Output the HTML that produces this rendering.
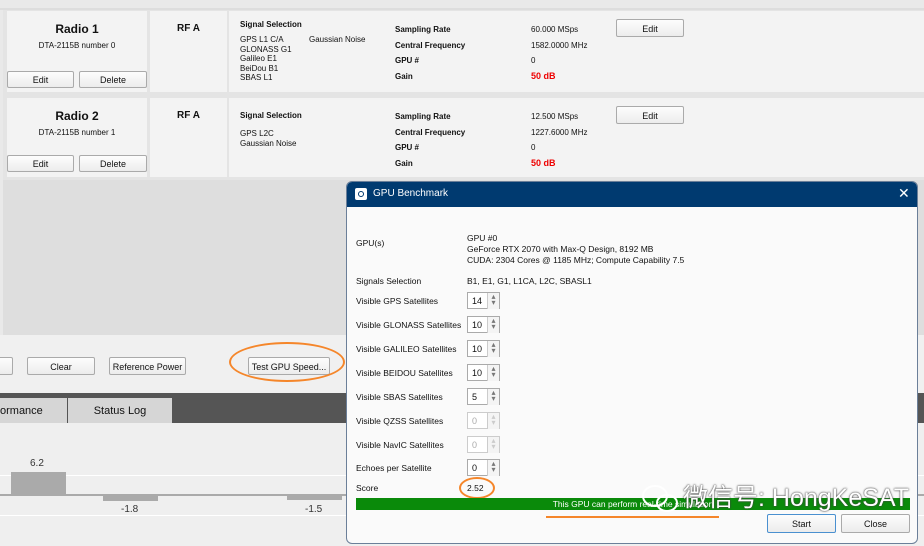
<!DOCTYPE html>
<html><head><meta charset="utf-8"><style>
*{box-sizing:border-box;margin:0;padding:0}
body{width:924px;height:546px;overflow:hidden;background:#e9e9e9;font-family:"Liberation Sans",sans-serif;position:relative;font-size:9px;color:#111}
.a{position:absolute}
.cell{position:absolute;background:#f3f3f3}
.btn{position:absolute;background:linear-gradient(#fdfdfd,#ececec);border:1px solid #aaa;border-radius:2px;text-align:center;font-size:9px;color:#111}
b{font-weight:bold}
.lbl{position:absolute;font-size:8.5px}
.spin{position:absolute;width:33px;height:17px;border:1px solid #aaa;background:#fff;font-size:9px;padding:3px 0 0 4px}
.spin:after{content:"▴\A▾";white-space:pre;line-height:6px;font-size:8px;color:#777;text-align:center;padding-top:1px;position:absolute;right:0;top:0;width:11px;height:15px;border-left:1px solid #ccc;background:#f4f4f4}
.dis{color:#aaa;border-color:#ccc}
.dis:after{color:#ccc}
</style></head><body>
<div class="a" style="left:0;top:8px;width:924px;height:2px;background:#ddd"></div>
<div class="a" style="left:3px;top:10px;width:921px;height:170px;background:#e4e4e4"></div>
<!-- row1 -->
<div class="cell" style="left:7px;top:11px;width:140px;height:81px"></div>
<div class="cell" style="left:150px;top:11px;width:77px;height:81px"></div>
<div class="cell" style="left:229px;top:11px;width:695px;height:81px"></div>
<div class="a" style="left:7px;top:22px;width:140px;text-align:center;font-size:12px;font-weight:bold">Radio 1</div>
<div class="a" style="left:7px;top:41px;width:140px;text-align:center;font-size:8px">DTA-2115B number 0</div>
<div class="btn" style="left:7px;top:71px;width:67px;height:17px;padding-top:3px">Edit</div>
<div class="btn" style="left:79px;top:71px;width:68px;height:17px;padding-top:3px">Delete</div>
<div class="a" style="left:150px;top:23px;width:77px;text-align:center;font-size:10px;font-weight:bold">RF A</div>
<div class="a" style="left:240px;top:20px;font-size:8px;font-weight:bold">Signal Selection</div>
<div class="a" style="left:240px;top:35px;font-size:8px;line-height:9.5px">GPS L1 C/A<br>GLONASS G1<br>Galileo E1<br>BeiDou B1<br>SBAS L1</div>
<div class="a" style="left:309px;top:35px;font-size:8px">Gaussian Noise</div>
<div class="a" style="left:395px;top:22px;font-size:8px;font-weight:bold;line-height:15.5px">Sampling Rate<br>Central Frequency<br>GPU #<br>Gain</div>
<div class="a" style="left:531px;top:22px;font-size:8px;line-height:15.5px">60.000 MSps<br>1582.0000 MHz<br>0<br><b style="color:#e00;font-size:9px">50 dB</b></div>
<div class="btn" style="left:616px;top:19px;width:68px;height:18px;padding-top:4px">Edit</div>
<!-- row2 -->
<div class="cell" style="left:7px;top:98px;width:140px;height:79px"></div>
<div class="cell" style="left:150px;top:98px;width:77px;height:79px"></div>
<div class="cell" style="left:229px;top:98px;width:695px;height:79px"></div>
<div class="a" style="left:7px;top:109px;width:140px;text-align:center;font-size:12px;font-weight:bold">Radio 2</div>
<div class="a" style="left:7px;top:128px;width:140px;text-align:center;font-size:8px">DTA-2115B number 1</div>
<div class="btn" style="left:7px;top:155px;width:67px;height:17px;padding-top:3px">Edit</div>
<div class="btn" style="left:79px;top:155px;width:68px;height:17px;padding-top:3px">Delete</div>
<div class="a" style="left:150px;top:110px;width:77px;text-align:center;font-size:10px;font-weight:bold">RF A</div>
<div class="a" style="left:240px;top:111px;font-size:8px;font-weight:bold">Signal Selection</div>
<div class="a" style="left:240px;top:129px;font-size:8px;line-height:9.5px">GPS L2C<br>Gaussian Noise</div>
<div class="a" style="left:395px;top:109px;font-size:8px;font-weight:bold;line-height:15.5px">Sampling Rate<br>Central Frequency<br>GPU #<br>Gain</div>
<div class="a" style="left:531px;top:109px;font-size:8px;line-height:15.5px">12.500 MSps<br>1227.6000 MHz<br>0<br><b style="color:#e00;font-size:9px">50 dB</b></div>
<div class="btn" style="left:616px;top:106px;width:68px;height:18px;padding-top:4px">Edit</div>
<!-- grey area -->
<div class="a" style="left:3px;top:180px;width:921px;height:155px;background:#dedede"></div>
<div class="a" style="left:0;top:335px;width:924px;height:58px;background:#f0f0f0"></div>
<div class="btn" style="left:-5px;top:357px;width:18px;height:18px"></div>
<div class="btn" style="left:27px;top:357px;width:68px;height:18px;padding-top:4px">Clear</div>
<div class="btn" style="left:109px;top:357px;width:77px;height:18px;padding-top:4px">Reference Power</div>
<div class="btn" style="left:248px;top:357px;width:82px;height:18px;padding-top:4px">Test GPU Speed...</div>
<div class="a" style="left:229px;top:342px;width:116px;height:40px;border:2px solid #f5862a;border-radius:50%"></div>
<div class="a" style="left:0;top:393px;width:924px;height:30px;background:#555"></div>
<div class="a" style="left:0;top:398px;width:67px;height:25px;background:#d6d6d6;font-size:11px;padding:7px 0 0 0">ormance</div>
<div class="a" style="left:68px;top:398px;width:104px;height:25px;background:#d6d6d6;font-size:11px;text-align:center;padding-top:7px">Status Log</div>
<div class="a" style="left:0;top:423px;width:924px;height:123px;background:#efefef"></div>
<div class="a" style="left:0;top:475px;width:924px;height:1px;background:#fff"></div>
<div class="a" style="left:0;top:515px;width:924px;height:1px;background:#fff"></div>
<div class="a" style="left:0;top:494px;width:924px;height:2px;background:#aaa"></div>
<div class="a" style="left:11px;top:472px;width:55px;height:22px;background:#aaa"></div>
<div class="a" style="left:30px;top:458px;font-size:10px;color:#333">6.2</div>
<div class="a" style="left:103px;top:495px;width:55px;height:6px;background:#aaa"></div>
<div class="a" style="left:121px;top:504px;font-size:10px;color:#333">-1.8</div>
<div class="a" style="left:287px;top:495px;width:55px;height:5px;background:#aaa"></div>
<div class="a" style="left:305px;top:504px;font-size:10px;color:#333">-1.5</div>
<!-- dialog -->
<div class="a" style="left:346px;top:181px;width:572px;height:363px;background:#fafafa;border:1px solid #6b7f99;border-radius:6px;overflow:hidden">
<div class="a" style="left:0;top:0;width:572px;height:25px;background:#003a70"></div>
<div class="a" style="left:8px;top:6px;width:12px;height:12px;background:#fff;border-radius:2px"></div>
<div class="a" style="left:11px;top:9px;width:6px;height:6px;border:1.5px solid #003a70;border-radius:50%"></div>
<div class="a" style="left:26px;top:6px;color:#fff;font-size:10px">GPU Benchmark</div>
<div class="a" style="left:551px;top:3px;color:#fff;font-size:14px">✕</div>
</div>
<div class="lbl" style="left:356px;top:238px">GPU(s)</div>
<div class="lbl" style="left:467px;top:233px;line-height:11px">GPU #0<br>GeForce RTX 2070 with Max-Q Design, 8192 MB<br>CUDA: 2304 Cores @ 1185 MHz; Compute Capability 7.5</div>
<div class="lbl" style="left:356px;top:276px">Signals Selection</div>
<div class="lbl" style="left:467px;top:276px">B1, E1, G1, L1CA, L2C, SBASL1</div>
<div class="lbl" style="left:356px;top:296px">Visible GPS Satellites</div><div class="spin" style="left:467px;top:292px">14</div>
<div class="lbl" style="left:356px;top:320px">Visible GLONASS Satellites</div><div class="spin" style="left:467px;top:316px">10</div>
<div class="lbl" style="left:356px;top:344px">Visible GALILEO Satellites</div><div class="spin" style="left:467px;top:340px">10</div>
<div class="lbl" style="left:356px;top:368px">Visible BEIDOU Satellites</div><div class="spin" style="left:467px;top:364px">10</div>
<div class="lbl" style="left:356px;top:392px">Visible SBAS Satellites</div><div class="spin" style="left:467px;top:388px">5</div>
<div class="lbl" style="left:356px;top:416px">Visible QZSS Satellites</div><div class="spin dis" style="left:467px;top:412px">0</div>
<div class="lbl" style="left:356px;top:440px">Visible NavIC Satellites</div><div class="spin dis" style="left:467px;top:436px">0</div>
<div class="lbl" style="left:356px;top:463px">Echoes per Satellite</div><div class="spin" style="left:467px;top:459px">0</div>
<div class="lbl" style="left:356px;top:483px">Score</div>
<div class="lbl" style="left:467px;top:483px">2.52</div>
<div class="a" style="left:459px;top:477px;width:36px;height:22px;border:2px solid #f5862a;border-radius:50%"></div>
<div class="a" style="left:356px;top:498px;width:554px;height:12px;background:#0a8a0a;color:#fff;font-size:8.5px;text-align:center;padding-top:1px">This GPU can perform real-time simulation</div>
<div class="a" style="left:546px;top:516px;width:173px;height:2px;background:#f5862a"></div>
<svg class="a" style="left:640px;top:484px" width="42" height="30" viewBox="0 0 42 30"><ellipse cx="15" cy="12" rx="12" ry="10" fill="none" stroke="#fff" stroke-width="2"/><ellipse cx="27" cy="19" rx="10" ry="8" fill="none" stroke="#fff" stroke-width="2"/></svg>
<div class="a" style="left:683px;top:483px;font-size:25px;line-height:30px;color:#fff;text-shadow:0 0 2px #444,0 0 1px #444;font-family:'Liberation Sans','Noto Sans CJK SC',sans-serif;white-space:nowrap">微信号: HongKeSAT</div>
<div class="btn" style="left:767px;top:514px;width:69px;height:19px;padding-top:4px;border-color:#4a90d0">Start</div>
<div class="btn" style="left:841px;top:514px;width:69px;height:19px;padding-top:4px">Close</div>
</body></html>
